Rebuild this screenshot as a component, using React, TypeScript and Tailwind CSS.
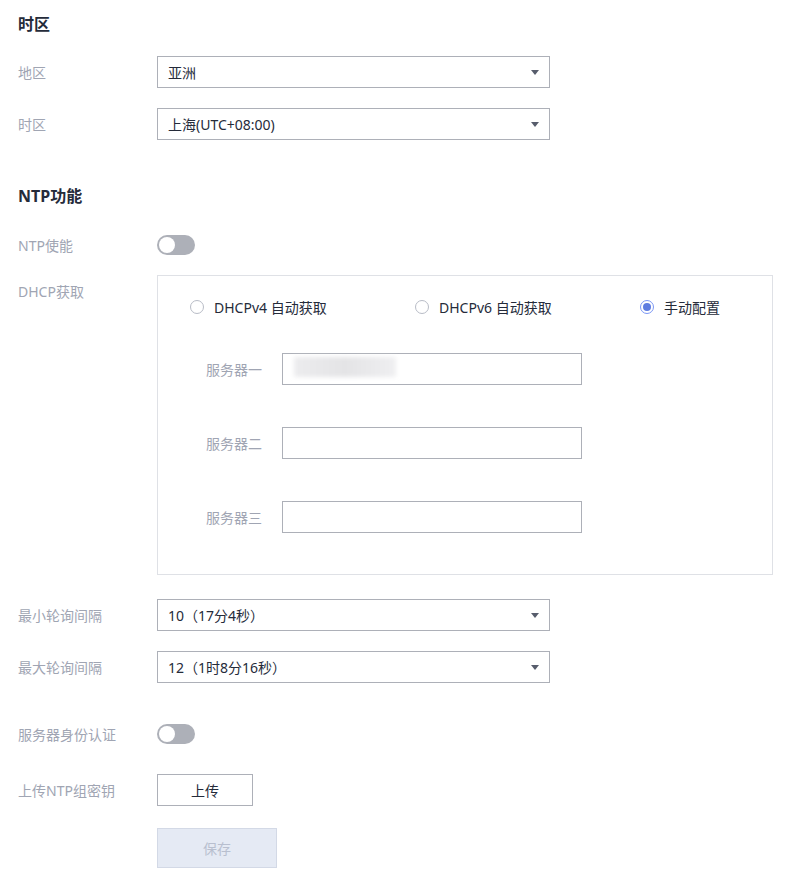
import React from 'react';

const font = { fontFamily: '"Noto Sans", "Noto Sans CJK SC", sans-serif' };

function Select({ value }: { value: string }) {
  return (
    <div className="flex items-center justify-between w-[393px] h-[32px] border border-[#adb0b8] bg-white pl-[10px] pr-[10px] text-[14px] text-[#252b3a]">
      <span>{value}</span>
      <svg width="8" height="5" viewBox="0 0 8 5">
        <path d="M0 0 H8 L4 5 Z" fill="#575d6c" />
      </svg>
    </div>
  );
}

function Toggle() {
  return (
    <div className="flex items-center w-[38px] h-[20px] rounded-full bg-[#adb0b8] px-[2px]">
      <span className="w-[16px] h-[16px] rounded-full bg-white" />
    </div>
  );
}

function Row({ label, children, className = '' }: { label: string; children: React.ReactNode; className?: string }) {
  return (
    <div className={`flex items-center ${className}`}>
      <div className="w-[139px] text-[14px] text-[#a0a5b3]">{label}</div>
      {children}
    </div>
  );
}

function Radio({ label, checked, className = '' }: { label: string; checked?: boolean; className?: string }) {
  return (
    <div className={`flex shrink-0 items-center gap-[10px] ${className}`}>
      {checked ? (
        <span className="flex items-center justify-center w-[14px] h-[14px] rounded-full border border-[#7b97f5]">
          <span className="w-[8px] h-[8px] rounded-full bg-[#5e7ce0]" />
        </span>
      ) : (
        <span className="w-[14px] h-[14px] rounded-full border border-[#b8bcc6]" />
      )}
      <span className="text-[14px] text-[#252b3a]">{label}</span>
    </div>
  );
}

function ServerInput({ label, filled, className = '' }: { label: string; filled?: boolean; className?: string }) {
  return (
    <div className={`flex items-center ${className}`}>
      <div className="w-[76px] text-[14px] text-[#a0a5b3]">{label}</div>
      <div className="relative w-[300px] h-[32px] border border-[#adb0b8] bg-white">
        {filled && (
          <div className="absolute left-[11px] top-[3px] w-[102px] h-[20px] bg-gradient-to-r from-[#ececee] via-[#e4e4e6] to-[#efeff1] blur-[2px]" />
        )}
      </div>
    </div>
  );
}

export default function App() {
  return (
    <div className="min-h-screen bg-white pl-[18px] pt-[14px]" style={font}>
      {/* 时区 */}
      <h2 className="h-[20px] leading-[20px] text-[16px] font-bold text-[#252b3a]">时区</h2>
      <Row label="地区" className="mt-[22px]">
        <Select value="亚洲" />
      </Row>
      <Row label="时区" className="mt-[20px]">
        <Select value="上海(UTC+08:00)" />
      </Row>

      {/* NTP功能 */}
      <h2 className="mt-[46px] h-[20px] leading-[20px] text-[16px] font-bold text-[#252b3a]">NTP功能</h2>
      <Row label="NTP使能" className="mt-[23px] h-[32px]">
        <Toggle />
      </Row>

      <div className="flex mt-[14px]">
        <div className="w-[139px] pt-[7px] leading-[20px] text-[14px] text-[#a0a5b3]">DHCP获取</div>
        <div className="w-[616px] h-[300px] border border-[#dfe1e6] pl-[32px] pt-[21px]">
          <div className="flex h-[20px] items-center">
            <Radio label="DHCPv4 自动获取" className="w-[225px]" />
            <Radio label="DHCPv6 自动获取" className="w-[225px]" />
            <Radio label="手动配置" checked />
          </div>
          <div className="pl-[16px]">
            <ServerInput label="服务器一" filled className="mt-[36px]" />
            <ServerInput label="服务器二" className="mt-[42px]" />
            <ServerInput label="服务器三" className="mt-[42px]" />
          </div>
        </div>
      </div>

      <Row label="最小轮询间隔" className="mt-[24px]">
        <Select value="10（17分4秒）" />
      </Row>
      <Row label="最大轮询间隔" className="mt-[20px]">
        <Select value="12（1时8分16秒）" />
      </Row>

      <Row label="服务器身份认证" className="mt-[35px] h-[32px]">
        <Toggle />
      </Row>
      <Row label="上传NTP组密钥" className="mt-[24px]">
        <button className="w-[96px] h-[32px] border border-[#adb0b8] bg-white text-[14px] text-[#252b3a]">上传</button>
      </Row>
      <div className="flex mt-[22px] pl-[139px]">
        <button className="w-[120px] h-[40px] border border-[#d3d9e6] bg-[#e5eaf4] text-[14px] text-[#b8bfcf]">保存</button>
      </div>
    </div>
  );
}
